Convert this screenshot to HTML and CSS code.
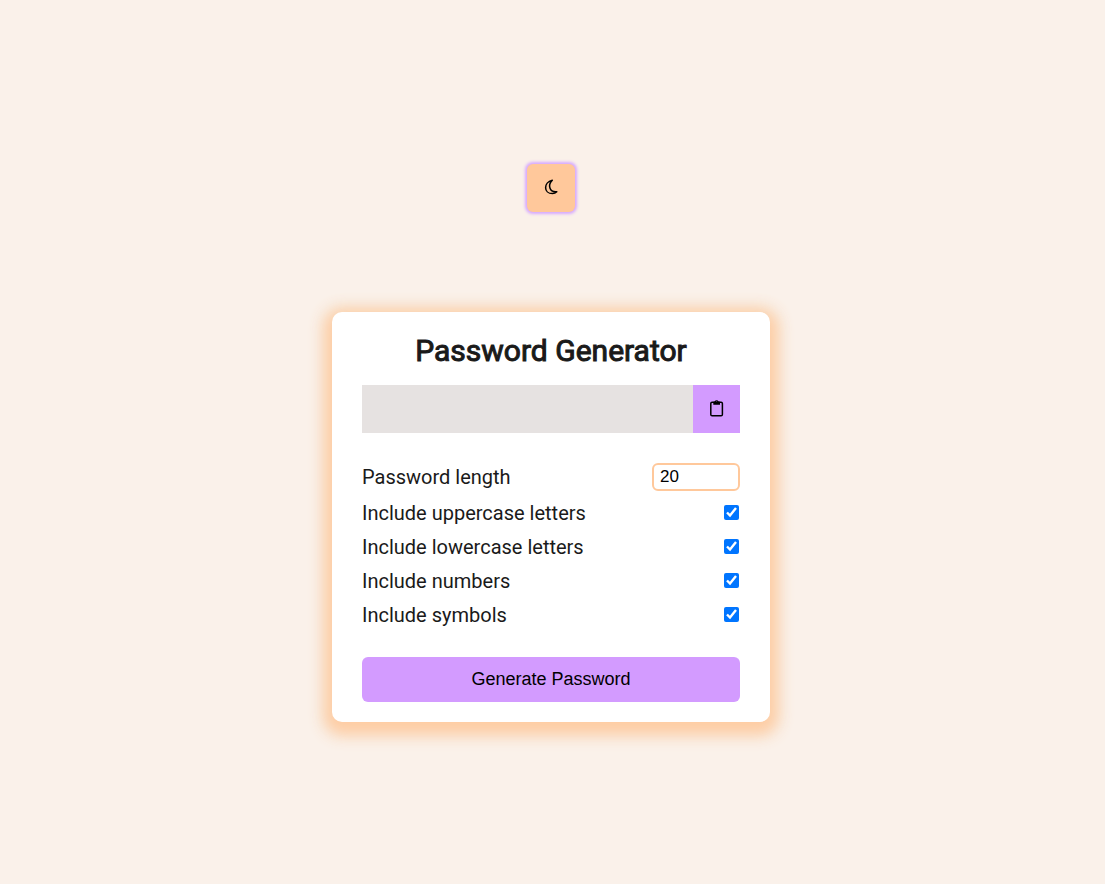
FILE: index.html
```html
<!DOCTYPE html>
<html lang="en">
<head>
<meta charset="utf-8">
<meta name="viewport" content="width=device-width, initial-scale=1">
<title>Password Generator</title>
<link rel="stylesheet" href="styles.css">
</head>
<body>
<button class="theme-toggle" type="button" aria-label="Switch to dark theme">
  <svg class="icon" viewBox="0 0 16 18" aria-hidden="true"><path d="M9.3 1.2C.3 3.2 .4 14.6 9.5 14.6Q12 14.6 13.8 12.8C6.3 13.6 4.5 5.8 9.3 1.2Z"/></svg>
</button>
<main class="card">
  <h1 class="title">Password Generator</h1>
  <div class="result">
    <input class="result-text" type="text" aria-label="Generated password" readonly>
    <button class="copy" type="button" aria-label="Copy password">
      <svg class="icon" viewBox="0 0 16 18" aria-hidden="true"><rect x="1.8" y="2.2" width="11.6" height="13.6" rx="1.3"/><path class="clip" fill-rule="evenodd" d="M4.3 4.8V2.6Q4.3 1.6 5.3 1.6H5.7A2 2 0 0 1 9.5 1.6H10Q11 1.6 11 2.6V4.8ZM7.6 1.2A.7.7 0 1 0 7.6 2.6A.7.7 0 1 0 7.6 1.2Z"/></svg>
    </button>
  </div>
  <div class="settings">
    <div class="setting"><label for="length">Password length</label><input class="length" id="length" type="number" min="4" max="20" value="20"></div>
    <div class="setting"><label for="upper">Include uppercase letters</label><input class="check" id="upper" type="checkbox" checked></div>
    <div class="setting"><label for="lower">Include lowercase letters</label><input class="check" id="lower" type="checkbox" checked></div>
    <div class="setting"><label for="numbers">Include numbers</label><input class="check" id="numbers" type="checkbox" checked></div>
    <div class="setting"><label for="symbols">Include symbols</label><input class="check" id="symbols" type="checkbox" checked></div>
  </div>
  <button class="generate" type="button">Generate Password</button>
</main>
</body>
</html>
```
FILE: styles.css
```css
* { box-sizing: border-box; }
body {
  margin: 0;
  padding: 2px 3px 0 0;
  min-height: 100vh;
  display: flex;
  flex-direction: column;
  align-items: center;
  justify-content: center;
  gap: 100px;
  background: #faf1ea;
  color: #1a1a1a;
  font-family: Roboto, sans-serif;
  font-size: 20px;
}
button {
  border: 0;
  padding: 0;
  color: #000;
  cursor: pointer;
}
.icon {
  display: block;
  width: 16px;
  height: 18px;
  fill: none;
  stroke: #000;
  stroke-width: 1.5;
  stroke-linejoin: round;
}
.clip {
  fill: #000;
  stroke: none;
}
.theme-toggle {
  display: grid;
  place-items: center;
  width: 48px;
  height: 48px;
  border-radius: 6px;
  background: #ffc89b;
  box-shadow: 0 0 3px 2px #d6a8ff;
}
.card {
  width: 438px;
  max-width: 100%;
  padding: 20px 30px;
  border-radius: 10px;
  background: #fff;
  box-shadow: 0 5px 15px 8px #ffc89bdd, 0 3px 15px 8px #f5eadb;
}
.title {
  margin: 0 0 15px;
  font-size: 30px;
  font-weight: 400;
  line-height: 38px;
  text-align: center;
  -webkit-text-stroke: 1px currentColor;
}
.result {
  display: flex;
  height: 48px;
  margin-bottom: 30px;
  background: #e6e2e1;
}
.result-text {
  flex: 1;
  min-width: 0;
  border: 0;
  padding: 12px;
  background: transparent;
  font-size: 18px;
}
.copy {
  display: grid;
  place-items: center;
  width: 47px;
  background: #d39bff;
}
.settings {
  display: grid;
  gap: 10px;
  margin-bottom: 30px;
}
.setting {
  display: flex;
  align-items: center;
  justify-content: space-between;
  line-height: 24px;
}
.length {
  width: 88px;
  height: 28px;
  padding: 0 6px;
  border: 2px solid #ffc89b;
  border-radius: 6px;
  background: #fff;
  color: #000;
  font-family: "Liberation Sans", Arial, sans-serif;
  font-size: 17px;
}
.check {
  width: 15px;
  height: 15px;
  margin: 0 1px 2px 0;
}
.generate {
  display: block;
  width: 100%;
  height: 45px;
  border-radius: 6px;
  background: #d39bff;
  font-family: "Liberation Sans", Arial, sans-serif;
  font-size: 18px;
}
```
